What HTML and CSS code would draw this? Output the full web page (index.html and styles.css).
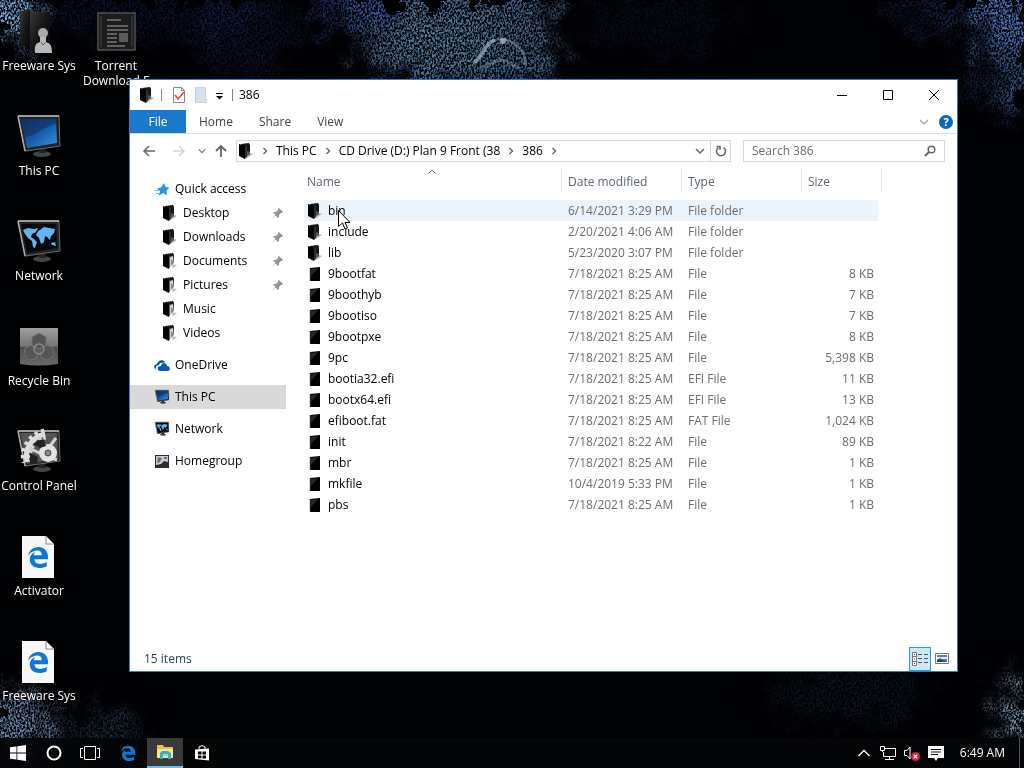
FILE: index.html
```html
<!DOCTYPE html>
<html lang="en">
<head>
  <meta charset="UTF-8">
  <meta name="viewport" content="width=device-width, initial-scale=1.0">
  <title>386</title>
  <link rel="stylesheet" href="styles.css">
</head>
<body>

  <!-- Shared icon shapes -->
  <svg class="defs" aria-hidden="true">
    <defs>
      <linearGradient id="blueScreen" x1="0" y1="0" x2="1" y2="1">
        <stop offset="0" stop-color="#123a6c"/><stop offset=".5" stop-color="#1659a8"/><stop offset="1" stop-color="#3a95e8"/>
      </linearGradient>
      <linearGradient id="grayBox" x1="0" y1="0" x2="0" y2="1">
        <stop offset="0" stop-color="#a0a0a0"/><stop offset=".49" stop-color="#747474"/><stop offset=".5" stop-color="#4c4c4c"/><stop offset="1" stop-color="#686868"/>
      </linearGradient>
      <linearGradient id="darkBox" x1="0" y1="0" x2="1" y2="1">
        <stop offset="0" stop-color="#3a3a3a"/><stop offset=".5" stop-color="#161616"/><stop offset="1" stop-color="#050505"/>
      </linearGradient>
    </defs>
    <symbol id="folder" viewBox="0 0 16 16">
      <path d="M9 9l6 2-6 4z" fill="#b4b4b4"/>
      <path d="M3 1l8-1 1 2v9l-5 2z" fill="#161616"/>
      <path d="M1 1l6 2v13l-6-3z" fill="#000"/>
      <path d="M7 3l2-1v12l-2 2z" fill="#2e2e2e"/>
      <path d="M9 8l3 1v2l-3 2z" fill="#555"/>
    </symbol>
    <symbol id="folder-docs" viewBox="0 0 16 16">
      <path d="M9 11l6 1-4 3z" fill="#bdbdbd"/>
      <path d="M3 1l8-1 1 2v9l-5 2z" fill="#1c1c1c"/>
      <path d="M8 4l3-1 1 9-4 2z" fill="#d6d2c6"/>
      <path d="M9 6l2 2v3l-2 1z" fill="#8d8877"/>
      <path d="M1 1l6 2v13l-6-3z" fill="#050505"/>
      <path d="M7 4l1-1v11l-1 2z" fill="#555"/>
    </symbol>
    <symbol id="file" viewBox="0 0 16 16">
      <path d="M3 2l10-1v14H3z" fill="#020202"/>
      <path d="M4 3l7-1-7 8z" fill="#262626"/>
      <path d="M3 2v13" stroke="#777" stroke-width=".6"/>
    </symbol>
    <symbol id="monitor" viewBox="0 0 48 48">
      <ellipse cx="27" cy="41" rx="9" ry="3" fill="#444"/>
      <path d="M24 35l6-1 1 6h-7z" fill="#222"/>
      <path d="M3 3l41 0 1 30-35 6z" fill="#222"/>
      <path d="M3 3h41l1 30-35 5z" fill="none" stroke="#6a6a6a" stroke-width="1"/>
      <path d="M3 3h41" stroke="#bbb" stroke-width="1.500"/>
      <path d="M3 3l7 35" stroke="#aaa" stroke-width="1.500"/>
    </symbol>
    <symbol id="pc" viewBox="0 0 48 48">
      <use href="#monitor"/>
      <path d="M6 6h35l1 24-30 5z" fill="url(#blueScreen)"/>
      <path d="M6 6h35v5C28 13 21 24 10 24z" fill="#0e2c52" opacity=".55"/>
    </symbol>
    <symbol id="network" viewBox="0 0 48 48">
      <use href="#monitor"/>
      <path d="M6 6h35l1 24-30 5z" fill="#05090f"/>
      <path d="M8 12l5-2 6 1 4-1-2 4-4 2-1 3 3 2 3 3-2 6-2-1-1-6-4-3-3-4zM25 12l4-3 5 1 6 1-1 4-3 3-1 4-3-3-2-1-1 6-3 2-2-6-3-3 2-4zM36 25l4-1 1 4-4-1z" fill="#64b4ee"/>
    </symbol>
    <symbol id="edge" viewBox="0 0 24 24">
      <path d="M1 11C2 5 6.500 1 12.500 1 19 1 23 6 23 12v2.500H8C8.200 18 11 19.500 14 19.500s5.500-1 7.500-2.100V22c-2 1.200-5 2-8 2C7 24 3 20 3 14.500 3 11 5.500 8 9 6.800 7.800 8 7.600 9 7.400 10h8.800c0-3-1.700-5-4.700-5C7 5 3 7.500 1 11z" fill="#0b78d4"/>
    </symbol>
    <symbol id="edge-page" viewBox="0 0 48 48">
      <path d="M7 3h24l8 8v34H7z" fill="#f7f7f7"/>
      <path d="M31 3l8 8h-8z" fill="#fff" stroke="#888" stroke-width="1"/>
      <use href="#edge" x="12" y="13" width="22" height="22"/>
    </symbol>
    <symbol id="pin" viewBox="0 0 12 12">
      <path d="M7 1l4 4-1 1-1 0-2 2 0 2-1 1-2.500-2.500L1 11l2.500-3.500L1 6l1-1h2l2-2V2z" fill="#8d949b"/>
    </symbol>
    <symbol id="chev-right" viewBox="0 0 8 8"><path d="M2.500 1l3 3-3 3" fill="none" stroke="#666" stroke-width="1.400"/></symbol>
    <symbol id="chev-down" viewBox="0 0 10 10"><path d="M1 3l4 4 4-4" fill="none" stroke="currentColor" stroke-width="1.500"/></symbol>
  </svg>

  <!-- Wallpaper -->
  <svg class="wallpaper" viewBox="0 0 1024 768" preserveAspectRatio="xMidYMid slice" aria-hidden="true">
    <defs>
      <filter id="grain" x="0" y="0" width="1024" height="768" filterUnits="userSpaceOnUse" color-interpolation-filters="sRGB">
        <feGaussianBlur in="SourceGraphic" stdDeviation="12" result="soft"/>
        <feTurbulence type="fractalNoise" baseFrequency=".045" numOctaves="5" seed="4"/>
        <feColorMatrix values="1 0 0 0 0  0 1 0 0 0  0 0 1 0 0  0 0 0 0 1" result="warp"/>
        <feDisplacementMap in="soft" in2="warp" scale="60" xChannelSelector="R" yChannelSelector="G" result="clouds"/>
        <feTurbulence type="fractalNoise" baseFrequency=".55 .4" numOctaves="3" seed="9"/>
        <feColorMatrix values="0 0 0 0 1  0 0 0 0 1  0 0 0 0 1  3.600 0 0 0 -1.350" result="specks"/>
        <feComposite in="clouds" in2="specks" operator="in"/>
      </filter>
    </defs>
    <rect width="1024" height="768" fill="#000103"/>
    <g filter="url(#grain)">
      <ellipse cx="5" cy="12" rx="28" ry="34" fill="#7fb2e6"/>
      <ellipse cx="150" cy="10" rx="110" ry="30" fill="#2b3d8c" opacity=".28"/>
      <ellipse cx="245" cy="35" rx="50" ry="45" fill="#2a3a88" opacity=".3"/>
      <path d="M345-30h205l4 125H440l-65-25-20-40z" fill="#486f98" opacity=".9"/>
      <ellipse cx="445" cy="40" rx="50" ry="30" fill="#6b98b4" opacity=".45"/>
      <ellipse cx="350" cy="5" rx="45" ry="22" fill="#3547a4" opacity=".7"/>
      <ellipse cx="660" cy="20" rx="80" ry="40" fill="#32418f" opacity=".16"/>
      <ellipse cx="1005" cy="8" rx="38" ry="45" fill="#5482cc" opacity=".9"/>
      <ellipse cx="930" cy="8" rx="40" ry="20" fill="#435ab4" opacity=".35"/>
      <ellipse cx="1018" cy="72" rx="22" ry="42" fill="#4d74ae" opacity=".7"/>
      <ellipse cx="985" cy="70" rx="22" ry="40" fill="#2d4a80" opacity=".35"/>
      <ellipse cx="15" cy="725" rx="36" ry="34" fill="#7396bf" opacity=".9"/>
      <ellipse cx="105" cy="732" rx="40" ry="18" fill="#466486" opacity=".5"/>
      <ellipse cx="1022" cy="720" rx="24" ry="34" fill="#83aacb" opacity=".9"/>
      <ellipse cx="850" cy="695" rx="85" ry="28" fill="#385783" opacity=".22"/>
    </g>
    <g fill="none" stroke="#a4bccb" stroke-linecap="round">
      <path d="M475 62c7-6 10-18 18-21" stroke-width="4" opacity=".65"/>
      <path d="M493 41c11-5 25 1 31 14l2 10" stroke-width="2" opacity=".45"/>
      <path d="M481 68c7 0 12-7 20-8s10 6 17 7" stroke-width="3" opacity=".3"/>
    </g>
    <circle cx="503" cy="41" r="3" fill="#b8cbd6" opacity=".7"/>
  </svg>

  <main class="desktop">
    <div class="shortcuts">
      <a class="shortcut" href="#">
        <svg viewBox="0 0 48 48">
          <path d="M5 3l10-1v40L5 36z" fill="url(#darkBox)"/>
          <path d="M15 2l20 3v38H15z" fill="url(#darkBox)"/>
          <circle cx="28" cy="25" r="5" fill="#aaa"/>
          <path d="M20 45c-1-9 2-10 5-11v-5h6v5c3 1 6 2 6 11z" fill="#b8b8b8"/>
          <path d="M26 34l2 3 3-3" fill="none" stroke="#666"/>
        </svg>
        <span>Freeware Sys</span>
      </a>
      <a class="shortcut" href="#">
        <svg viewBox="0 0 48 48">
          <rect x="6" y="5" width="37" height="37" fill="#1c1c1c" stroke="#505050" stroke-width="1.500"/>
          <path d="M9 8v31M40 8v31" stroke="#303030" stroke-width="2"/>
          <path d="M15 12h14M15 18h21M15 22h21M15 26h10M15 30h10M15 34h10M15 38h18" stroke="#777" stroke-width="1.500"/>
          <rect x="27" y="25" width="9" height="9" fill="#5a5a5a"/>
        </svg>
        <span>Torrent Download F</span>
      </a>
      <a class="shortcut" href="#"><svg><use href="#pc"/></svg><span>This PC</span></a>
      <a class="shortcut" href="#"><svg><use href="#network"/></svg><span>Network</span></a>
      <a class="shortcut" href="#">
        <svg viewBox="0 0 48 48">
          <path d="M5 5h38v36q-19 3-38 0z" fill="url(#grayBox)"/>
          <g fill="#555" stroke="#777" stroke-width=".8">
            <path d="M24 10l7 4v9l-7 3-7-3v-9z"/>
            <path d="M16 22l7 5-1 8-7 2-6-5 1-7z"/>
            <path d="M32 22l6 3 1 7-6 5-7-2-1-8z"/>
          </g>
          <circle cx="24" cy="26" r="5" fill="none" stroke="#8a8a8a" stroke-width="1.500"/>
        </svg>
        <span>Recycle Bin</span>
      </a>
      <a class="shortcut" href="#">
        <svg viewBox="0 0 48 48">
          <use href="#monitor"/>
          <path d="M5 5h37l1 26-31 5z" fill="#555"/>
          <path d="M30 6a23 23 0 0 0-18 28" fill="none" stroke="#ddd" stroke-width="5"/>
          <path d="M30 6a23 23 0 0 0-18 28" fill="none" stroke="#ddd" stroke-width="11" stroke-dasharray="3 3"/>
          <path d="M24 9l8 13 9-12M14 20l17 8 11 4" fill="none" stroke="#d2d2d2" stroke-width="3"/>
          <circle cx="33" cy="25" r="9" fill="#e2e2e2"/>
          <circle cx="33" cy="25" r="3" fill="#888" stroke="#444"/>
          <path d="M18 16c4-4 8-5 11-4l2 6-6 2zM15 25l8 4-1 6-7 1z" fill="#222"/>
        </svg>
        <span>Control Panel</span>
      </a>
      <a class="shortcut" href="#"><svg><use href="#edge-page"/></svg><span>Activator</span></a>
      <a class="shortcut" href="#"><svg><use href="#edge-page"/></svg><span>Freeware Sys</span></a>
    </div>

    <section class="window">
      <header class="titlebar">
        <svg class="icon"><use href="#folder"/></svg>
        <span class="sep"></span>
        <button class="quick" aria-label="Properties">
          <svg viewBox="0 0 16 16"><path d="M2.500.500h8l3 3v12h-11z" fill="#fff" stroke="#888"/><path d="M10.500.500v3h3" fill="none" stroke="#888"/><path d="M4 8l3 4 6-7" fill="none" stroke="#e5483f" stroke-width="1.600"/></svg>
        </button>
        <button class="quick" aria-label="New folder">
          <svg viewBox="0 0 16 16"><path d="M2.500.500h10v11l1 1v3h-11z" fill="#d6e2ef" stroke="#c6d3e0"/></svg>
        </button>
        <button class="quick small" aria-label="Customize">
          <svg viewBox="0 0 8 16"><path d="M1 6.500h7" stroke="#000"/><path d="M1 9h7L4.500 12.500z"/></svg>
        </button>
        <span class="sep"></span>
        <h1>386</h1>
        <div class="controls">
          <button aria-label="Minimize"><svg viewBox="0 0 10 10"><path d="M0 5.500h10" stroke="#000"/></svg></button>
          <button aria-label="Maximize"><svg viewBox="0 0 10 10"><path d="M.500.500h9v9h-9z" fill="none" stroke="#000"/></svg></button>
          <button aria-label="Close"><svg viewBox="0 0 10 10"><path d="M0 0l10 10M10 0L0 10" stroke="#000"/></svg></button>
        </div>
      </header>

      <nav class="tabs">
        <button class="tab file">File</button>
        <button class="tab">Home</button>
        <button class="tab">Share</button>
        <button class="tab">View</button>
        <div class="tabs-end">
          <button class="plain" aria-label="Expand the ribbon"><svg class="tiny light"><use href="#chev-down"/></svg></button>
          <button class="help" aria-label="Help">?</button>
        </div>
      </nav>

      <div class="navbar">
        <button class="plain back" aria-label="Back"><svg viewBox="0 0 14 14"><path d="M13 7H2M7 2L2 7l5 5" fill="none" stroke="#666" stroke-width="1.500"/></svg></button>
        <button class="plain forward" aria-label="Forward"><svg viewBox="0 0 14 14"><path d="M1 7h11M7 2l5 5-5 5" fill="none" stroke="#d4d4d4" stroke-width="1.500"/></svg></button>
        <button class="plain recent" aria-label="Recent locations"><svg class="mini"><use href="#chev-down"/></svg></button>
        <button class="plain up" aria-label="Up"><svg viewBox="0 0 14 14"><path d="M7 13V2M2 7l5-5 5 5" fill="none" stroke="#666" stroke-width="1.800"/></svg></button>
        <div class="address">
          <svg class="icon"><use href="#folder"/></svg>
          <svg class="crumb-sep"><use href="#chev-right"/></svg>
          <a href="#">This PC</a>
          <svg class="crumb-sep"><use href="#chev-right"/></svg>
          <a href="#">CD Drive (D:) Plan 9 Front (38</a>
          <svg class="crumb-sep"><use href="#chev-right"/></svg>
          <a href="#">386</a>
          <svg class="crumb-sep"><use href="#chev-right"/></svg>
          <div class="address-end">
            <button class="plain" aria-label="Previous locations"><svg class="tiny"><use href="#chev-down"/></svg></button>
            <button class="plain refresh" aria-label="Refresh"><svg viewBox="0 0 12 12"><path d="M8.500 2.500A4.500 4.500 0 1 1 3.500 2.500" fill="none" stroke="#666" stroke-width="1.500"/><path d="M1.500 1.500h3.500V5" fill="none" stroke="#666" stroke-width="1.500"/></svg></button>
          </div>
        </div>
        <div class="search">
          <input type="search" placeholder="Search 386" aria-label="Search 386">
          <svg viewBox="0 0 12 12"><circle cx="7.500" cy="4.500" r="3.300" fill="none" stroke="#666" stroke-width="1.500"/><path d="M5 7l-4 4" stroke="#666" stroke-width="2"/></svg>
        </div>
      </div>

      <div class="content">
        <aside class="sidebar">
          <ul>
            <li><a href="#"><svg class="icon" viewBox="0 0 16 16"><path d="M10 2l1.500 4 4 .5-3 3 .5 4.500-4-2-4.500 3L6 10.500 3 7.500l4-1z" fill="#2497dd"/><path d="M1 9.500h5M2 12.500h3" stroke="#74bfe9"/></svg>Quick access</a>
              <ul class="sub">
                <li><a href="#"><svg class="icon"><use href="#folder"/></svg>Desktop<svg class="pin"><use href="#pin"/></svg></a></li>
                <li><a href="#"><svg class="icon"><use href="#folder"/></svg>Downloads<svg class="pin"><use href="#pin"/></svg></a></li>
                <li><a href="#"><svg class="icon"><use href="#folder-docs"/></svg>Documents<svg class="pin"><use href="#pin"/></svg></a></li>
                <li><a href="#"><svg class="icon"><use href="#folder-docs"/></svg>Pictures<svg class="pin"><use href="#pin"/></svg></a></li>
                <li><a href="#"><svg class="icon"><use href="#folder-docs"/></svg>Music</a></li>
                <li><a href="#"><svg class="icon"><use href="#folder-docs"/></svg>Videos</a></li>
              </ul>
            </li>
            <li><a href="#"><svg class="icon" viewBox="0 0 16 16"><path d="M1 12c-2-3 0-5 2-5 1-4 6-5 8-2l-2 1C6 5 5 8 5 8c-3 0-4 3-3 5z" fill="#0a4fa8"/><path d="M4 13c-1-3 1-4 3-4 0-4 6-4 6 0 3 0 4 4 1 5H6z" fill="#0d55b5"/></svg>OneDrive</a></li>
            <li><a href="#" class="selected"><svg class="icon"><use href="#pc"/></svg>This PC</a></li>
            <li><a href="#"><svg class="icon"><use href="#network"/></svg>Network</a></li>
            <li><a href="#"><svg class="icon" viewBox="0 0 16 16"><path d="M1 2h14v13H1z" fill="#2b2d35"/><path d="M2 3h12v6l-4-1-3 3-5 1z" fill="#c9ccd3"/><path d="M4 4l4 1-2 4-3 1zM10 4h3v2h-3z" fill="#6e727c"/></svg>Homegroup</a></li>
          </ul>
        </aside>

        <div class="files">
          <table>
            <colgroup><col class="col-name"><col class="col-date"><col class="col-type"><col class="col-size"></colgroup>
            <thead>
              <tr><th>Name<svg class="sort" viewBox="0 0 8 5"><path d="M.500 4.500L4 1l3.500 3.500" fill="none" stroke="#666"/></svg></th><th>Date modified</th><th>Type</th><th>Size</th></tr>
            </thead>
            <tbody>
              <tr class="hover"><td><svg class="icon"><use href="#folder"/></svg>bin</td><td>6/14/2021 3:29 PM</td><td>File folder</td><td></td></tr>
              <tr><td><svg class="icon"><use href="#folder"/></svg>include</td><td>2/20/2021 4:06 AM</td><td>File folder</td><td></td></tr>
              <tr><td><svg class="icon"><use href="#folder"/></svg>lib</td><td>5/23/2020 3:07 PM</td><td>File folder</td><td></td></tr>
              <tr><td><svg class="icon"><use href="#file"/></svg>9bootfat</td><td>7/18/2021 8:25 AM</td><td>File</td><td>8 KB</td></tr>
              <tr><td><svg class="icon"><use href="#file"/></svg>9boothyb</td><td>7/18/2021 8:25 AM</td><td>File</td><td>7 KB</td></tr>
              <tr><td><svg class="icon"><use href="#file"/></svg>9bootiso</td><td>7/18/2021 8:25 AM</td><td>File</td><td>7 KB</td></tr>
              <tr><td><svg class="icon"><use href="#file"/></svg>9bootpxe</td><td>7/18/2021 8:25 AM</td><td>File</td><td>8 KB</td></tr>
              <tr><td><svg class="icon"><use href="#file"/></svg>9pc</td><td>7/18/2021 8:25 AM</td><td>File</td><td>5,398 KB</td></tr>
              <tr><td><svg class="icon"><use href="#file"/></svg>bootia32.efi</td><td>7/18/2021 8:25 AM</td><td>EFI File</td><td>11 KB</td></tr>
              <tr><td><svg class="icon"><use href="#file"/></svg>bootx64.efi</td><td>7/18/2021 8:25 AM</td><td>EFI File</td><td>13 KB</td></tr>
              <tr><td><svg class="icon"><use href="#file"/></svg>efiboot.fat</td><td>7/18/2021 8:25 AM</td><td>FAT File</td><td>1,024 KB</td></tr>
              <tr><td><svg class="icon"><use href="#file"/></svg>init</td><td>7/18/2021 8:22 AM</td><td>File</td><td>89 KB</td></tr>
              <tr><td><svg class="icon"><use href="#file"/></svg>mbr</td><td>7/18/2021 8:25 AM</td><td>File</td><td>1 KB</td></tr>
              <tr><td><svg class="icon"><use href="#file"/></svg>mkfile</td><td>10/4/2019 5:33 PM</td><td>File</td><td>1 KB</td></tr>
              <tr><td><svg class="icon"><use href="#file"/></svg>pbs</td><td>7/18/2021 8:25 AM</td><td>File</td><td>1 KB</td></tr>
            </tbody>
          </table>
        </div>
      </div>

      <footer class="statusbar">
        <span>15 items</span>
        <div class="views">
          <button class="active" aria-label="Details view">
            <svg viewBox="0 0 16 14"><path d="M.500.500h4v13h-4zM.500 4.500h4M.500 9.500h4" fill="#fff" stroke="#777"/><path d="M2 2.500h1M2 7h1M2 11.500h1" stroke="#333"/><path d="M6 2.500h4M12 2.500h4M6 6.500h4M12 6.500h4M6 10.500h4M12 10.500h4" stroke="#555"/></svg>
          </button>
          <button aria-label="Large icons view">
            <svg viewBox="0 0 16 14"><path d="M1.500 1.500h13v10h-13z" fill="#fff" stroke="#777"/><path d="M3 3h10v7H3z" fill="#5d82a8"/><path d="M3 5h10v2H8L6 6 3 8z" fill="#d9e8f3"/><path d="M3 8l3-1 7 3H3z" fill="#2c4659"/></svg>
          </button>
        </div>
      </footer>
    </section>
  </main>

  <footer class="taskbar">
    <button aria-label="Start"><svg viewBox="0 0 16 16"><path d="M0 2.300L6.500 1.400v6.200H0zM7.300 1.300L16 0v7.600H7.300zM0 8.400h6.500v6.200L0 13.700zM7.300 8.400H16V16l-8.700-1.300z" fill="#fff"/></svg></button>
    <button aria-label="Cortana"><svg viewBox="0 0 16 16"><circle cx="8" cy="8" r="6.500" fill="none" stroke="#fff" stroke-width="2"/></svg></button>
    <button aria-label="Task view"><svg class="wide" viewBox="0 0 20 16"><path d="M4.500 1.500h11v13h-11zM3 3.500H.500v9H3M17 3.500h2.500v9H17" fill="none" stroke="#fff"/></svg></button>
    <div class="apps">
      <button aria-label="Edge"><svg><use href="#edge"/></svg></button>
      <button class="running" aria-label="File Explorer"><svg viewBox="0 0 16 16"><path d="M0 1h6l1 2h9v11H0z" fill="#e9c04e"/><path d="M0 5h16v9H0z" fill="#fbe38d"/><path d="M3 15V9l2-2h6l3 2v6h-3v-3H6v3z" fill="#35b0d4"/><path d="M6 10h5v2H6z" fill="#8bd7ea"/></svg></button>
      <button aria-label="Store"><svg viewBox="0 0 16 16"><path d="M1 4.500l14-1v12L1 14z" fill="#fff"/><path d="M5 4V2q3-3 6 0v2" fill="none" stroke="#fff"/><path d="M4 6.500h3.500v3H4zM8.500 6.500H12v3H8.500zM4 10.500h3.500v2.700H4zM8.500 10.500H12v3H8.500z" fill="#000"/></svg></button>
    </div>
    <div class="tray">
      <button aria-label="Show hidden icons"><svg viewBox="0 0 16 16"><path d="M2.500 11L8 5.500l5.500 5.500" fill="none" stroke="#fff" stroke-width="1.300"/></svg></button>
      <button aria-label="Network"><svg viewBox="0 0 16 16"><path d="M5 3.500h10.500v8H3.500V7M9.500 11.500v3M5 14.500h9M.500 1.500h4v4h-4zM2.500 5.500V7" fill="none" stroke="#fff"/></svg></button>
      <button aria-label="Volume muted"><svg viewBox="0 0 16 16"><path d="M.500 5.500h2.500l3-3.500v12l-3-3.500H.500z" fill="none" stroke="#fff"/><circle cx="11.500" cy="11.500" r="4.500" fill="#d0213f"/><path d="M9.800 9.800l3.400 3.400M13.200 9.800l-3.400 3.400" stroke="#fff" stroke-width="1.300"/></svg></button>
      <button aria-label="Notifications"><svg viewBox="0 0 16 16"><path d="M0 1h16v12h-6l-2 3-2-3H0z" fill="#fff"/><path d="M3 4.500h10M3 7h10M3 9.500h7" stroke="#111"/></svg></button>
      <time>6:49 AM</time>
      <button class="show-desktop" aria-label="Show desktop"></button>
    </div>
  </footer>

  <svg class="cursor" viewBox="0 0 12 20" aria-hidden="true"><path d="M.500.500v16l4-3.500 2.500 6 2.500-1-2.500-5.500h5z" fill="#fff" stroke="#000"/></svg>

</body>
</html>
```

FILE: styles.css
```css
* {
  box-sizing: border-box;
}

body {
  display: flex;
  flex-direction: column;
  height: 100vh;
  margin: 0;
  overflow: hidden;
  background-color: #000;
  color: #000;
  font-family: "Open Sans", "Noto Sans", sans-serif;
  font-size: 12px;
  line-height: 16px;
}

a {
  color: inherit;
  text-decoration: none;
}

button {
  display: flex;
  align-items: center;
  justify-content: center;
  padding: 0;
  border: none;
  background: none;
  color: inherit;
  font: inherit;
}

ul {
  margin: 0;
  padding: 0;
  list-style: none;
}

.defs {
  position: absolute;
  width: 0;
  height: 0;
}

.wallpaper {
  position: absolute;
  z-index: -1;
  width: 100%;
  height: 100%;
}

.icon {
  width: 16px;
  height: 16px;
  flex: none;
}

/* Desktop shortcuts */
.desktop {
  position: relative;
  flex: 1;
}

.shortcuts {
  display: grid;
  grid-template-columns: 78px 76px;
  grid-auto-rows: 105px;
}

.shortcut {
  grid-column: 1;
  display: flex;
  flex-direction: column;
  align-items: center;
  gap: 2px;
  padding-top: 8px;
  color: #fff;
  line-height: 15px;
  text-align: center;
  text-shadow: 0 1px 2px #000;
}

.shortcut:nth-child(2) {
  grid-column: 2;
}

.shortcut svg {
  width: 48px;
  height: 48px;
}

.shortcut span {
  white-space: nowrap;
}

.shortcut:nth-child(2) span {
  width: 72px;
  white-space: normal;
}

/* Explorer window */
.window {
  position: absolute;
  top: 79px;
  right: 66px;
  bottom: 66px;
  left: 129px;
  display: flex;
  flex-direction: column;
  border: 1px solid #2d7fc9;
  background-color: #fff;
}

.titlebar {
  display: flex;
  align-items: center;
  height: 30px;
  padding-left: 9px;
}

.titlebar h1 {
  margin: 0;
  font-size: 12px;
  font-weight: normal;
}

.sep {
  width: 1px;
  height: 12px;
  margin: 0 6px;
  background-color: #888;
}

.quick {
  width: 22px;
}

.quick svg {
  width: 16px;
  height: 16px;
}

.quick.small {
  width: 14px;
}

.quick.small svg {
  width: 8px;
}

.controls {
  display: flex;
  align-self: stretch;
  margin-left: auto;
}

.controls button {
  width: 46px;
}

.controls svg {
  width: 10px;
  height: 10px;
}

/* Ribbon tabs */
.tabs {
  display: flex;
  height: 24px;
  border-bottom: 1px solid #dadbdc;
}

.tab {
  padding: 0 13px;
  color: #444;
}

.tab.file {
  width: 56px;
  background-color: #1979ca;
  color: #fff;
}

.tabs-end {
  display: flex;
  align-items: center;
  gap: 10px;
  margin-left: auto;
  padding-right: 4px;
}

.tiny {
  width: 10px;
  height: 10px;
  color: #666;
}

.tiny.light {
  color: #aaa;
}

.mini {
  width: 8px;
  height: 8px;
  color: #777;
}

.help {
  width: 14px;
  height: 14px;
  border-radius: 50%;
  background-color: #0b67b2;
  color: #fff;
  font-size: 11px;
  font-weight: bold;
}

/* Address bar */
.navbar {
  display: flex;
  align-items: center;
  height: 34px;
  padding: 0 12px;
}

.back,
.forward {
  width: 30px;
  justify-content: flex-start;
}

.forward {
  width: 26px;
}

.recent {
  width: 8px;
}

.up {
  width: 30px;
}

.navbar > .plain svg:not(.mini) {
  width: 14px;
  height: 14px;
}

.address {
  display: flex;
  flex: 1;
  align-items: center;
  height: 22px;
  padding-left: 1px;
  border: 1px solid #d9d9d9;
}

.crumb-sep {
  width: 8px;
  height: 8px;
  margin: 0 7px;
}

.address-end {
  display: flex;
  align-self: stretch;
  margin-left: auto;
}

.address-end button {
  width: 20px;
}

.address-end .refresh {
  border-left: 1px solid #d9d9d9;
}

.refresh svg {
  width: 12px;
  height: 12px;
}

.search {
  display: flex;
  align-items: center;
  width: 202px;
  height: 22px;
  margin-left: 12px;
  padding: 0 8px;
  border: 1px solid #d9d9d9;
}

.search input {
  flex: 1;
  min-width: 0;
  padding: 0;
  border: none;
  outline: none;
  background: none;
  font: inherit;
}

.search input::placeholder {
  color: #6d6d6d;
}

.search svg {
  width: 12px;
  height: 12px;
}

/* Folder tree and file list */
.content {
  display: flex;
  flex: 1;
  min-height: 0;
  gap: 18px;
}

.sidebar {
  width: 156px;
  padding-top: 9px;
}

.sidebar li {
  margin-bottom: 8px;
}

.sidebar a {
  display: flex;
  align-items: center;
  gap: 5px;
  height: 24px;
  padding-left: 24px;
}

.sidebar .selected {
  background-color: #d9d9d9;
}

.sidebar .sub li {
  margin-bottom: 0;
}

.sidebar .sub a {
  padding-left: 32px;
}

.pin {
  width: 12px;
  height: 12px;
  margin-right: 2px;
  margin-left: auto;
}

.files {
  flex: 1;
}

table {
  width: 578px;
  table-layout: fixed;
  border-collapse: collapse;
}

.col-name {
  width: 258px;
}

.col-date,
.col-type {
  width: 120px;
}

.col-size {
  width: 80px;
}

thead tr {
  height: 32px;
}

th {
  position: relative;
  padding: 0 6px 4px;
  color: #5c6675;
  font-weight: normal;
  text-align: left;
  background: linear-gradient(#e5e5e5, #e5e5e5) right top / 1px 25px no-repeat;
}

.sort {
  position: absolute;
  top: 1px;
  left: calc(50% - 5px);
  width: 8px;
  height: 5px;
}

th:first-child {
  padding-left: 3px;
}

tbody tr {
  height: 21px;
}

td {
  padding: 0 6px;
  color: #6d6d6d;
  white-space: nowrap;
}

td:first-child {
  display: flex;
  align-items: center;
  gap: 5px;
  height: 21px;
  padding-left: 3px;
  color: #000;
}

td:last-child {
  padding-right: 8px;
  text-align: right;
}

.hover {
  background: linear-gradient(#e9f4fc, #e9f4fc) left / calc(100% - 4px) 100% no-repeat;
}

/* Status bar */
.statusbar {
  display: flex;
  align-items: center;
  justify-content: space-between;
  height: 24px;
  padding: 0 4px 0 14px;
  color: #33415c;
}

.views {
  display: flex;
}

.views button {
  width: 22px;
  height: 24px;
}

.views .active {
  border: 1px solid #26a0da;
  background-color: #cce8f6;
}

.views svg {
  width: 16px;
  height: 14px;
}

/* Taskbar */
.taskbar {
  display: flex;
  height: 30px;
  background-color: rgba(4, 5, 7, 0.94);
  color: #fff;
}

.taskbar button {
  width: 36px;
}

.taskbar svg {
  width: 16px;
  height: 16px;
}

.taskbar .wide {
  width: 20px;
}

.apps {
  display: flex;
  gap: 1px;
  margin-left: 2px;
}

.apps .running {
  border-bottom: 2px solid #76b9ed;
  background-color: #3a3a3a;
}

.tray {
  display: flex;
  align-items: center;
  margin-left: auto;
}

.tray button {
  width: 24px;
}

.tray time {
  margin: 0 14px 0 12px;
}

.tray .show-desktop {
  width: 5px;
  height: 30px;
  border-left: 1px solid #555;
}

.cursor {
  position: absolute;
  top: 210px;
  left: 338px;
  width: 12px;
  height: 20px;
}
```
